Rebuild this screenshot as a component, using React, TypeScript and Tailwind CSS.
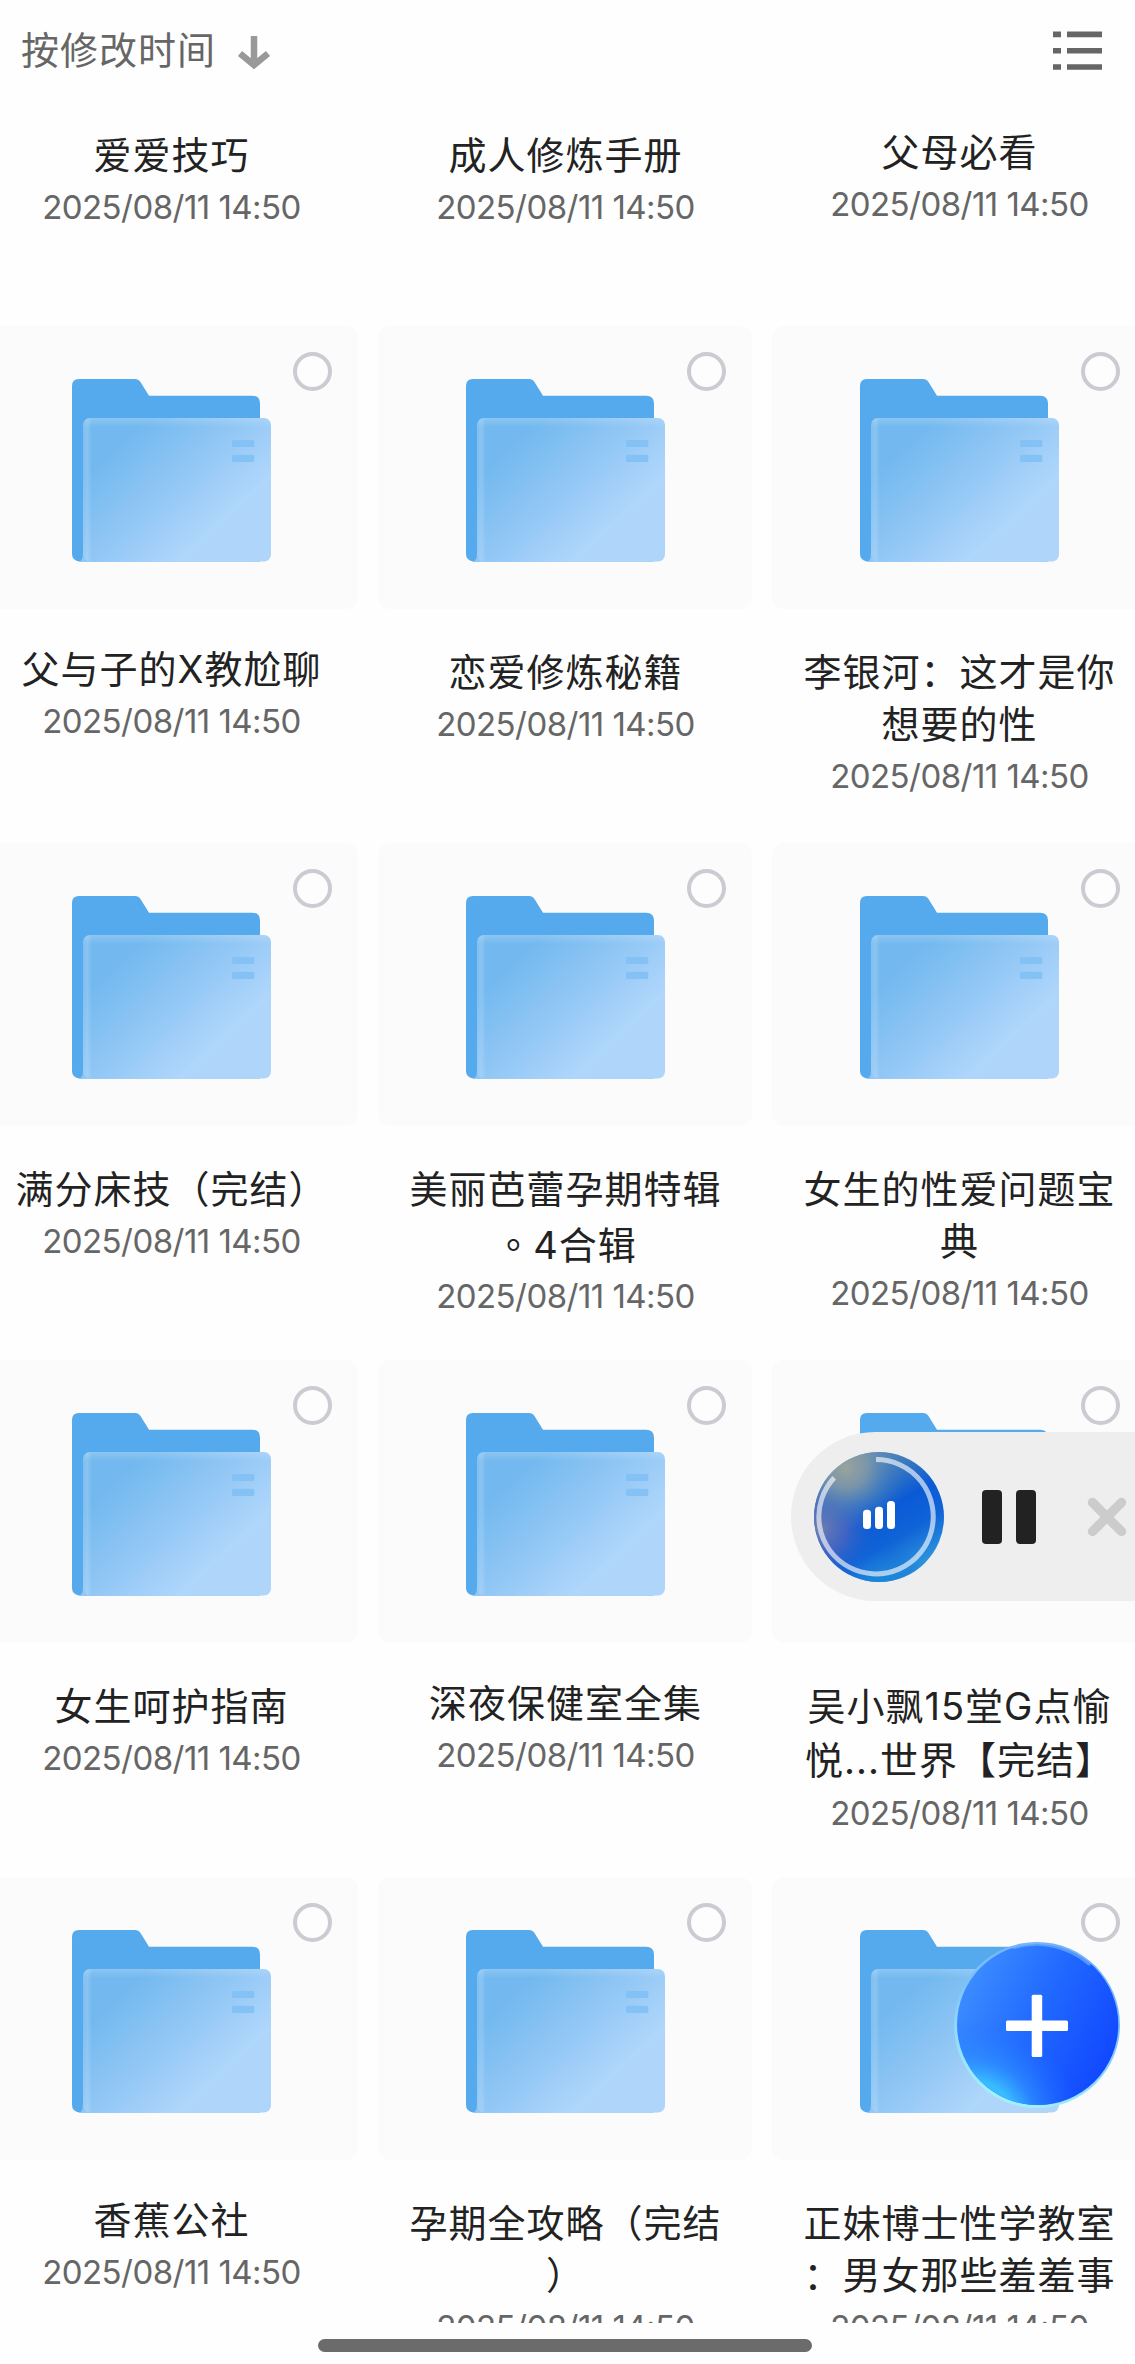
import React from "react";

type Folder = { lines: string[]; raised?: boolean; loose?: boolean };

const DATE = "2025/08/11 14:50";

const rows: Folder[][] = [
  [{ lines: ["爱爱技巧"] }, { lines: ["成人修炼手册"] }, { lines: ["父母必看"], raised: true }],
  [
    { lines: ["父与子的X教尬聊"], raised: true },
    { lines: ["恋爱修炼秘籍"] },
    { lines: ["李银河：这才是你", "想要的性"] },
  ],
  [
    { lines: ["满分床技（完结）"] },
    { lines: ["美丽芭蕾孕期特辑", "。4合辑"], loose: true },
    { lines: ["女生的性爱问题宝", "典"] },
  ],
  [
    { lines: ["女生呵护指南"] },
    { lines: ["深夜保健室全集"], raised: true },
    { lines: ["吴小飘15堂G点愉", "悦...世界【完结】"], loose: true },
  ],
  [
    { lines: ["香蕉公社"], raised: true },
    { lines: ["孕期全攻略（完结", "）"] },
    { lines: ["正妹博士性学教室", "：男女那些羞羞事"] },
  ],
];

function FolderIcon() {
  return (
    <svg width="200" height="183" viewBox="0 0 200 183">
      <defs>
        <linearGradient id="front" gradientUnits="userSpaceOnUse" x1="35" y1="78" x2="125" y2="174">
          <stop offset="0" stopColor="#73B9EF" />
          <stop offset="0.5" stopColor="#92C7F5" />
          <stop offset="0.95" stopColor="#AFD6FB" />
          <stop offset="1" stopColor="#AFD5FA" />
        </linearGradient>
        <linearGradient id="edgeLeft" x1="0" y1="0" x2="1" y2="0">
          <stop offset="0" stopColor="#fff" stopOpacity="0.1" />
          <stop offset="0.5" stopColor="#fff" stopOpacity="0.16" />
          <stop offset="1" stopColor="#fff" stopOpacity="0" />
        </linearGradient>
        <linearGradient id="edgeTop" x1="0" y1="0" x2="0" y2="1">
          <stop offset="0" stopColor="#fff" stopOpacity="0.18" />
          <stop offset="1" stopColor="#fff" stopOpacity="0" />
        </linearGradient>
        <clipPath id="frontClip">
          <rect x="11" y="39" width="188" height="143.500" rx="7" />
        </clipPath>
      </defs>
      <path
        d="M7 0H63Q66.500 0 68.500 3L77 16.700H180Q188 16.700 188 24.500V182.500H7Q0 181 0 175V7Q0 0 7 0Z"
        fill="#55AAEE"
      />
      <path d="M7 182.500Q11 182 11 174V100H180V182.700H7Z" fill="url(#front)" />
      <g clipPath="url(#frontClip)">
        <rect x="11" y="39" width="188" height="144" fill="url(#front)" />
        <rect x="11" y="39" width="9" height="144" fill="url(#edgeLeft)" />
        <rect x="11" y="39" width="188" height="9" fill="url(#edgeTop)" />
      </g>
      <rect x="160" y="61" width="22.300" height="7" rx="1.500" fill="#84C1F4" />
      <rect x="160" y="75.700" width="22.300" height="7.300" rx="1.500" fill="#84C1F4" />
    </svg>
  );
}

function Thumb() {
  return (
    <div className="relative flex h-[283px] items-start justify-center rounded-[12px] bg-[#fbfbfb] pt-[53px] pl-[2px]">
      <FolderIcon />
      <span className="absolute top-[26px] right-[26px] size-[39px] rounded-full border-4 border-[#cbcbd2] bg-[#fdfdfd]" />
    </div>
  );
}

function TitleLine({ text }: { text: string }) {
  if (text.startsWith("。")) {
    return (
      <>
        <span className="font-['Noto_Sans_CJK_TC',sans-serif]" lang="zh-TW">
          。
        </span>
        {text.slice(1)}
      </>
    );
  }
  return <>{text}</>;
}

function Caption({ item }: { item: Folder }) {
  return (
    <div
      className={
        item.raised ? "h-[234px] pt-[34px] pl-[1px] text-center" : "h-[234px] pt-[37px] pl-[1px] text-center"
      }
    >
      {item.lines.map((line, i) => (
        <div
          key={i}
          className={
            item.loose && i === 1
              ? "mt-[2px] mb-[1px] h-[52px] text-[38px] leading-[52px] tracking-[1px] whitespace-nowrap text-[#222]"
              : "h-[52px] text-[38px] leading-[52px] tracking-[1px] whitespace-nowrap text-[#222]"
          }
        >
          <TitleLine text={line} />
        </div>
      ))}
      <div className="h-[52px] font-['Inter',sans-serif] text-[33px] leading-[52px] tracking-[-0.55px] whitespace-nowrap text-[#666]">
        {DATE}
      </div>
    </div>
  );
}

function Player() {
  return (
    <div className="absolute top-[1432px] left-[791px] flex h-[169px] w-[344px] items-center rounded-l-full bg-[#eee] pl-[23px]">
      <svg width="130" height="130" viewBox="0 0 130 130" className="shrink-0">
        <defs>
          <linearGradient id="disc" gradientUnits="userSpaceOnUse" x1="28" y1="10" x2="98" y2="124">
            <stop offset="0" stopColor="#7093B0" />
            <stop offset="0.25" stopColor="#3A78BE" />
            <stop offset="0.48" stopColor="#0A5AD6" />
            <stop offset="0.7" stopColor="#1063D7" />
            <stop offset="1" stopColor="#2F9BDD" />
          </linearGradient>
          <radialGradient id="olive" gradientUnits="userSpaceOnUse" cx="32" cy="16" r="62">
            <stop offset="0" stopColor="#99A39C" />
            <stop offset="0.35" stopColor="#8399A6" stopOpacity="0.8" />
            <stop offset="0.7" stopColor="#4F84BC" stopOpacity="0.35" />
            <stop offset="1" stopColor="#2C70C4" stopOpacity="0" />
          </radialGradient>
          <radialGradient id="violet" gradientUnits="userSpaceOnUse" cx="4" cy="76" r="62">
            <stop offset="0" stopColor="#6F7FB0" />
            <stop offset="0.45" stopColor="#4C66BF" stopOpacity="0.8" />
            <stop offset="1" stopColor="#1060D4" stopOpacity="0" />
          </radialGradient>
          <radialGradient id="cyan" gradientUnits="userSpaceOnUse" cx="72" cy="146" r="52">
            <stop offset="0" stopColor="#1B8BDA" />
            <stop offset="0.5" stopColor="#1B82D9" stopOpacity="0.8" />
            <stop offset="1" stopColor="#1169D7" stopOpacity="0" />
          </radialGradient>
        </defs>
        <circle cx="65" cy="65" r="65" fill="url(#disc)" />
        <circle cx="65" cy="65" r="65" fill="url(#violet)" />
        <circle cx="65" cy="65" r="65" fill="url(#olive)" />
        <circle cx="65" cy="65" r="65" fill="url(#cyan)" />
        <path d="M62 7.500A57.200 57.200 0 1 1 20.200 25.700" fill="none" stroke="#fff" strokeOpacity="0.62" strokeWidth="5" />
        <rect x="49" y="57.700" width="8" height="19.300" rx="3.500" fill="#fff" />
        <rect x="61" y="54.700" width="8" height="22.300" rx="3.500" fill="#fff" />
        <rect x="73" y="49" width="8" height="28" rx="3.500" fill="#fff" />
      </svg>
      <div className="ml-[38px] flex gap-[14px]">
        <span className="h-[54px] w-[20px] rounded-[4px] bg-[#222]" />
        <span className="h-[54px] w-[20px] rounded-[4px] bg-[#222]" />
      </div>
      <svg width="40" height="40" viewBox="0 0 40 40" className="ml-[51px] shrink-0">
        <path d="M5.500 5.500L34.500 34.500M34.500 5.500L5.500 34.500" stroke="#ccc" strokeWidth="9.500" strokeLinecap="round" />
      </svg>
    </div>
  );
}

function AddButton() {
  return (
    <svg width="166" height="166" viewBox="0 0 166 166" className="absolute top-[1942px] left-[954px]">
      <defs>
        <linearGradient id="fab" x1="0.05" y1="0.25" x2="0.95" y2="0.7">
          <stop offset="0" stopColor="#3C8CFF" />
          <stop offset="0.5" stopColor="#2068FF" />
          <stop offset="1" stopColor="#1249FF" />
        </linearGradient>
        <radialGradient id="fabGlow" gradientUnits="userSpaceOnUse" cx="18" cy="184" r="108">
          <stop offset="0" stopColor="#3CC4FF" />
          <stop offset="0.42" stopColor="#38BCFF" />
          <stop offset="0.62" stopColor="#2F96FF" stopOpacity="0.6" />
          <stop offset="1" stopColor="#2070FF" stopOpacity="0" />
        </radialGradient>
        <linearGradient id="fabRim" x1="0.7" y1="0" x2="0.35" y2="1">
          <stop offset="0" stopColor="#6FB0F8" />
          <stop offset="0.4" stopColor="#7CC2FA" />
          <stop offset="1" stopColor="#A4F2FC" />
        </linearGradient>
      </defs>
      <circle cx="83" cy="83" r="83" fill="url(#fabRim)" />
      <circle cx="83.700" cy="82.500" r="80.600" fill="url(#fab)" />
      <circle cx="83.700" cy="82.500" r="80.600" fill="url(#fabGlow)" />
      <path d="M60 5.500A81 81 0 0 1 135 22" fill="none" stroke="#7DB8FB" strokeOpacity="0.6" strokeWidth="3" strokeLinecap="round" />
      <rect x="52" y="78.500" width="62" height="10.500" rx="1.500" fill="#fff" />
      <rect x="77.700" y="52.700" width="10.500" height="62.300" rx="1.500" fill="#fff" />
    </svg>
  );
}

export default function App() {
  return (
    <div className="relative h-[2364px] w-[1135px] overflow-hidden bg-[#fefefe] font-['Inter','Noto_Sans_CJK_SC',sans-serif]" lang="zh-CN">
      <header className="flex h-[92px] items-start justify-between pl-[21px] pr-[33px]">
        <div className="flex pt-[24px]">
          <span className="h-[52px] text-[38px] leading-[52px] tracking-[1px] text-[#666]">按修改时间</span>
          <svg width="34" height="36" viewBox="0 0 34 36" className="mt-[10px] ml-[21px]">
            <path d="M17 2V31M3 19.500L17 31L31 19.500" fill="none" stroke="#999" strokeWidth="6.500" strokeLinejoin="miter" />
          </svg>
        </div>
        <svg width="49" height="39" viewBox="0 0 49 39" className="mt-[31px]" fill="#666">
          <path d="M0 .5h8v5.700H0zM14 .5h35v5.700H14zM0 17h8v5.500H0zM14 17h35v5.500H14zM0 33.200h8v5.500H0zM14 33.200h35v5.500H14z" />
        </svg>
      </header>
      <main className="-ml-4 h-[2231px] w-[1162px] overflow-hidden">
        {rows.map((row, r) => (
          <section key={r} className="grid grid-cols-3 gap-x-5">
            {row.map((item, c) => (
              <article key={c}>
                {r > 0 && <Thumb />}
                <Caption item={item} />
              </article>
            ))}
          </section>
        ))}
      </main>
      <div className="mt-[16px] ml-[318px] h-[13px] w-[494px] rounded-full bg-[#6b6b6b]" />
      <Player />
      <AddButton />
    </div>
  );
}
